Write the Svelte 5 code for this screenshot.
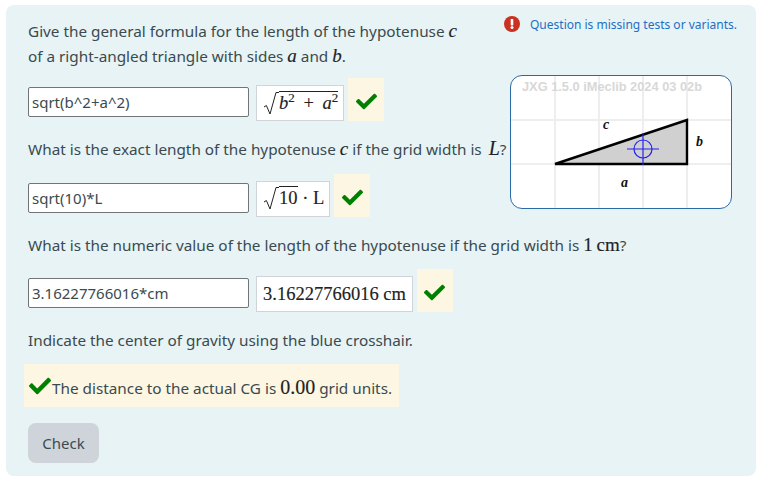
<script>
  const checkPath =
    'M173.898 439.404l-166.4-166.4c-9.997-9.997-9.997-26.206 0-36.204l36.203-36.204c9.997-9.998 26.207-9.998 36.204 0L192 312.69 432.095 72.596c9.997-9.997 26.207-9.997 36.204 0l36.203 36.204c9.997 9.997 9.997 26.206 0 36.204l-294.4 294.401c-9.998 9.997-26.207 9.997-36.204-.001z';
  const gridX = [45, 89, 133, 177];
  const gridY = [45, 89];
</script>

{#snippet tick()}
  <span class="tick">
    <svg width="21" height="21" viewBox="0 0 512 512"><path d={checkPath} fill="#008000" /></svg>
  </span>
{/snippet}

{#snippet radical()}
  <svg class="radical" width="16" height="25" viewBox="0 0 16 25">
    <path d="M1 16 L3.4 14.5 L7 23 L13 1.5 L16 1.5" fill="none" stroke="#222" stroke-width="1" />
  </svg>
{/snippet}

<div class="panel">
  <aside class="side">
    <div class="warning">
      <svg width="16" height="16" viewBox="0 0 16 16">
        <circle cx="8" cy="8" r="8" fill="#ca3120" />
        <rect x="6.7" y="3" width="2.6" height="6.4" rx="0.6" fill="#fff" />
        <circle cx="8" cy="11.6" r="1.5" fill="#fff" />
      </svg>
      <span>Question is missing tests or variants.</span>
    </div>
    <div class="board">
      <svg width="220" height="132" viewBox="1 1 220 132">
        {#each gridX as x}
          <line x1={x} y1="0" x2={x} y2="134" stroke="#eeeeee" stroke-width="2" />
        {/each}
        {#each gridY as y}
          <line x1="0" y1={y} x2="222" y2={y} stroke="#eeeeee" stroke-width="2" />
        {/each}
        <text class="jxg" x="12" y="16">JXG 1.5.0 iMeclib 2024 03 02b</text>
        <polygon points="45,89 177,45 177,89" fill="#d0d0d0" stroke="#000" stroke-width="2.4" />
        <g stroke="#2222ee" stroke-width="1.2" fill="none">
          <circle cx="133" cy="74" r="9" />
          <line x1="117" y1="74" x2="149" y2="74" />
          <line x1="133" y1="58" x2="133" y2="90" />
        </g>
        <text class="lbl" x="93" y="54">c</text>
        <text class="lbl" x="186" y="71">b</text>
        <text class="lbl" x="111" y="112">a</text>
      </svg>
    </div>
  </aside>

  <p class="first">
    Give the general formula for the length of the hypotenuse <i class="m">c</i><br />
    of a right-angled triangle with sides <i class="m">a</i> and <i class="m">b</i>.
  </p>
  <div class="row">
    <input type="text" value="sqrt(b^2+a^2)" />
    <span class="preview">
      {@render radical()}<span class="over"><i>b</i><sup>2</sup> + <i>a</i><sup>2</sup></span>
    </span>
    {@render tick()}
  </div>

  <p class="q">What is the exact length of the hypotenuse <i class="m">c</i> if the grid width is <i class="m big">L</i>?</p>
  <div class="row">
    <input type="text" value="sqrt(10)*L" />
    <span class="preview">
      {@render radical()}<span class="over">10</span>&nbsp;· L
    </span>
    {@render tick()}
  </div>

  <p class="q">What is the numeric value of the length of the hypotenuse if the grid width is <span class="m">1&thinsp;cm</span>?</p>
  <div class="row">
    <input type="text" value="3.16227766016*cm" />
    <span class="preview wide">3.16227766016 cm</span>
    {@render tick()}
  </div>

  <p class="q">Indicate the center of gravity using the blue crosshair.</p>
  <div class="feedback">
    <svg width="22" height="22" viewBox="0 0 512 512"><path d={checkPath} fill="#008000" /></svg>
    <span>The distance to the actual CG is <span class="m num">0.00</span> grid units.</span>
  </div>

  <button type="button">Check</button>
</div>

<style>
  :global(body) {
    background: #fff;
  }

  .panel {
    margin: 5px 4px 0 6px;
    height: 471px;
    box-sizing: border-box;
    padding: 14px 18px 0 22px;
    background: #e7f3f5;
    border-radius: 8px;
    font-family: "Noto Sans", sans-serif;
    font-size: 15.3px;
    line-height: 25px;
    color: #3a4a4f;
  }

  .side {
    float: right;
    width: 228px;
    margin-top: -6px;
  }

  .warning {
    display: flex;
    align-items: center;
    gap: 10px;
    height: 22px;
    margin-left: -6px;
    font-size: 12px;
    color: #1f6fc4;
    white-space: nowrap;
  }

  .warning svg {
    flex: none;
  }

  .board {
    width: 222px;
    height: 134px;
    box-sizing: border-box;
    margin-top: 40px;
    border: 1px solid #2a6aa6;
    border-radius: 12px;
    background: #fff;
    overflow: hidden;
  }

  .board svg {
    display: block;
  }

  .jxg {
    font-family: "Liberation Sans", sans-serif;
    font-size: 12.8px;
    font-weight: 700;
    fill: #d8d8d8;
  }

  .lbl {
    font-family: "Liberation Serif", serif;
    font-size: 14px;
    font-weight: 700;
    font-style: italic;
    fill: #111;
  }

  p {
    margin: 0;
  }

  .first {
    margin-bottom: -1px;
  }

  .q {
    line-height: 27.5px;
  }

  .m {
    font-family: "Liberation Serif", serif;
    font-size: 19px;
    line-height: 0;
    color: #222;
    -webkit-text-stroke: 0.15px #222;
  }

  .big {
    font-size: 20px;
    margin-left: 3px;
  }

  .row {
    display: flex;
    align-items: flex-end;
    margin: 10px 0 15px;
    gap: 7px;
  }

  input {
    width: 221px;
    height: 30px;
    box-sizing: border-box;
    margin-bottom: 4px;
    padding: 0 3px;
    border: 1px solid #6f7579;
    border-radius: 2px;
    background: #fff;
    font-family: "Noto Sans", sans-serif;
    font-size: 15px;
    color: #3a4a4f;
  }

  .preview {
    display: inline-flex;
    align-items: center;
    height: 36px;
    box-sizing: border-box;
    padding: 0 5px 0 6px;
    border: 1px solid #ced4da;
    background: #fff;
    font-family: "Liberation Serif", serif;
    font-size: 18.5px;
    color: #222;
    white-space: nowrap;
    -webkit-text-stroke: 0.15px #222;
  }

  .wide {
    padding-right: 6px;
  }

  .radical {
    flex: none;
  }

  .over {
    border-top: 1px solid #222;
    line-height: 22px;
    margin-top: -2px;
    word-spacing: 4px;
  }

  sup {
    font-size: 13px;
    line-height: 0;
  }

  .tick {
    display: flex;
    align-items: center;
    justify-content: center;
    width: 36px;
    height: 43px;
    box-sizing: border-box;
    padding-top: 4px;
    margin-left: -3px;
    background: #fdf6e3;
  }

  .feedback {
    display: flex;
    align-items: center;
    gap: 1px;
    width: 375px;
    height: 43px;
    box-sizing: border-box;
    margin: 9.5px 0 16px -4px;
    padding: 5px 0 0 5px;
    background: #fdf6e3;
  }

  .feedback svg {
    flex: none;
    margin-top: -5px;
  }

  .num {
    font-size: 20px;
  }

  button {
    display: block;
    width: 71px;
    height: 40px;
    border: none;
    border-radius: 8px;
    background: #ced4da;
    font-family: "Noto Sans", sans-serif;
    font-size: 15px;
    color: #3a4a4f;
  }
</style>
